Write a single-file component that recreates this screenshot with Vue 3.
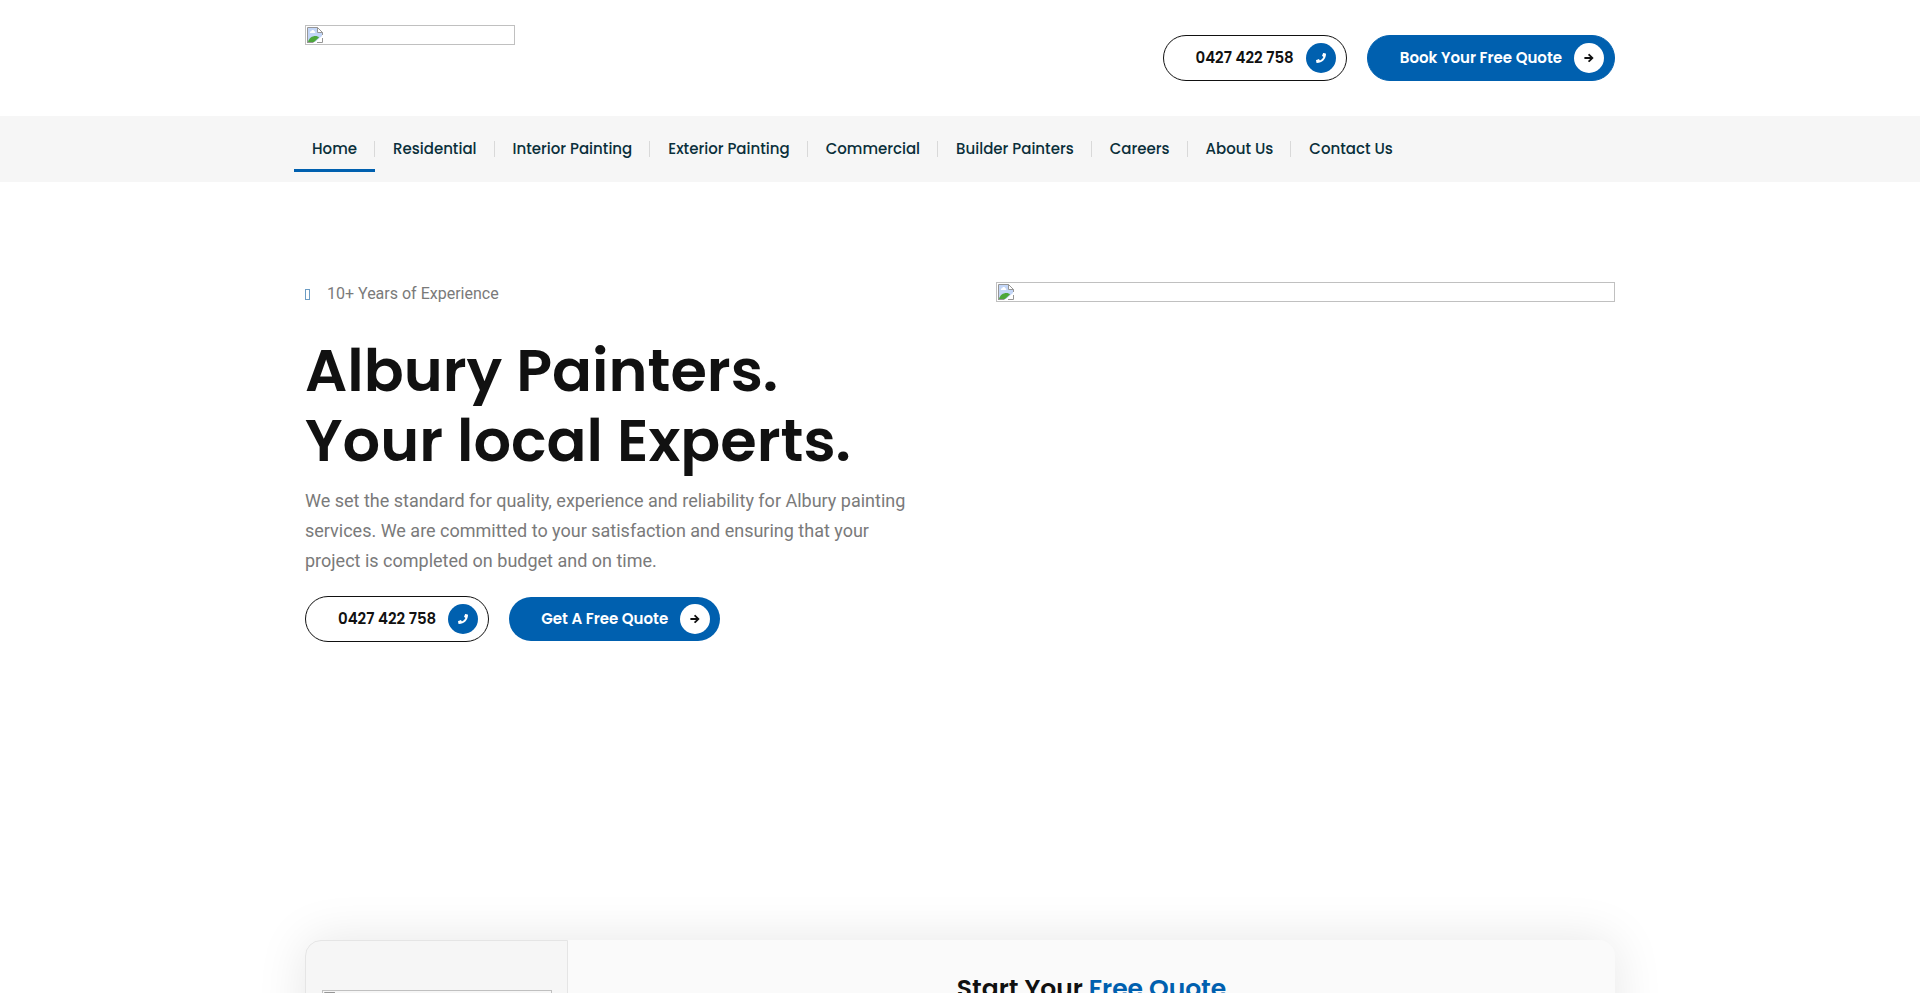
<template>
  <div class="page">
    <!-- placeholder shown where an image did not load -->
    <svg class="sprite" aria-hidden="true">
      <symbol id="missing" viewBox="0 0 16 16">
        <path d="M1 1h10l4 4v4l-7 6H1z" fill="#c3d6f7" />
        <path d="M3 6C2.600 5 3.300 4 4.200 4.200 4.600 2.600 7 2.600 7.300 4.200 8.600 4.200 8.800 6 7.600 6z" fill="#fff" />
        <path d="M1 15c1-4 4-6 7.500-6 1.500 0 2.700.5 3.500 1.500L7 15z" fill="#4da73a" />
        <path d="M10.500.5v5h5z" fill="#fff" stroke="#969696" />
        <path d="M.5 16V.5h10l5 5V8M0 15.500h6.500M10 15.500h5.500V11" fill="none" stroke="#969696" />
      </symbol>
    </svg>

    <!-- top bar -->
    <header class="container topbar">
      <a href="#" class="logo" aria-label="Home page">
        <span class="missing-image">
          <svg width="16" height="16" aria-hidden="true"><use href="#missing" /></svg>
        </span>
      </a>
      <div class="actions">
        <a v-for="btn in headerButtons" :key="btn.text" :href="btn.href" class="btn" :class="btn.type">
          <span>{{ btn.text }}</span>
          <span class="btn-icon">
            <svg viewBox="0 0 512 512" width="10" height="10" aria-hidden="true"><path :d="icons[btn.type]" /></svg>
          </span>
        </a>
      </div>
    </header>

    <!-- main menu -->
    <nav class="menu-bar">
      <ul class="menu">
        <li v-for="(item, i) in menu" :key="item">
          <a href="#" :class="{ active: i === 0 }">{{ item }}</a>
        </li>
      </ul>
    </nav>

    <!-- hero -->
    <section class="container hero">
      <div class="hero-text">
        <p class="experience">
          <i class="glyph-box"></i>
          <span>10+ Years of Experience</span>
        </p>
        <h1>Albury Painters.<br>Your local Experts.</h1>
        <p class="lead">
          We set the standard for quality, experience and reliability for Albury painting
          services. We are committed to your satisfaction and ensuring that your
          project is completed on budget and on time.
        </p>
        <div class="actions">
          <a v-for="btn in heroButtons" :key="btn.text" :href="btn.href" class="btn" :class="btn.type">
            <span>{{ btn.text }}</span>
            <span class="btn-icon">
              <svg viewBox="0 0 512 512" width="10" height="10" aria-hidden="true"><path :d="icons[btn.type]" /></svg>
            </span>
          </a>
        </div>
      </div>
      <div class="hero-image">
        <span class="missing-image">
          <svg width="16" height="16" aria-hidden="true"><use href="#missing" /></svg>
        </span>
      </div>
    </section>

    <!-- quote card -->
    <section class="container">
      <div class="quote-card">
        <div class="quote-side">
          <span class="missing-image">
            <svg width="16" height="16" aria-hidden="true"><use href="#missing" /></svg>
          </span>
        </div>
        <div class="quote-main">
          <h2>Start Your <span>Free Quote</span></h2>
        </div>
      </div>
    </section>
  </div>
</template>

<script setup>
const menu = [
  'Home',
  'Residential',
  'Interior Painting',
  'Exterior Painting',
  'Commercial',
  'Builder Painters',
  'Careers',
  'About Us',
  'Contact Us'
]

const phone = { text: '0427 422 758', href: 'tel:0427422758', type: 'phone' }
const headerButtons = [phone, { text: 'Book Your Free Quote', href: '#', type: 'quote' }]
const heroButtons = [phone, { text: 'Get A Free Quote', href: '#', type: 'quote' }]

const icons = {
  phone: 'M493 25 389 1c-11-3-23 3-27 14l-48 112c-4 10-1 21 7 28l61 49c-36 77-99 141-178 178l-49-61c-7-8-18-11-28-7L15 362c-11 5-17 16-14 27l24 104c2 11 12 19 24 19 256 0 463-207 463-463 0-12-8-22-19-24z',
  quote: 'M217 83l32-32c10-10 25-10 35 0l198 188c10 10 10 25 0 35L284 462c-10 10-25 10-35 0l-32-32c-10-10-9-26 0-36l96-90H40c-14 0-24-10-24-24v-48c0-14 10-24 24-24h273l-96-90c-10-10-10-25 0-35z'
}
</script>

<style>
body {
  margin: 0;
  background: #fff;
}
</style>

<style scoped>
.page {
  height: 100vh;
  overflow: hidden;
  font-family: Roboto, sans-serif;
  color: #7a7a7a;
}

.sprite {
  position: absolute;
  width: 0;
  height: 0;
}

.container {
  max-width: 1310px;
  margin: 0 auto;
}

.topbar {
  display: flex;
  justify-content: space-between;
  height: 116px;
}

.logo {
  width: 210px;
  padding-top: 25px;
}

.missing-image {
  display: block;
  box-sizing: border-box;
  height: 20px;
  padding: 1px;
  border: 1px solid #c0c0c0;
}

.missing-image svg {
  display: block;
}

.actions {
  display: flex;
  align-items: center;
  gap: 20px;
}

.btn {
  display: flex;
  align-items: center;
  gap: 12px;
  padding: 7px 10px 7px 32px;
  border: 1px solid #0060af;
  border-radius: 24px;
  font: 600 15px/30px Poppins, Inter, sans-serif;
  text-decoration: none;
  white-space: nowrap;
}

.btn.phone {
  border-color: #111;
  color: #111;
}

.btn.quote {
  background: #0060af;
  color: #fff;
}

.hero .btn.quote {
  border: none;
}

.btn-icon {
  display: flex;
  align-items: center;
  justify-content: center;
  width: 30px;
  height: 30px;
  border-radius: 50%;
}

.phone .btn-icon {
  background: #0060af;
  fill: #fff;
}

.quote .btn-icon {
  background: #fff;
  fill: #111;
}

.menu-bar {
  padding: 10px 0;
  background: #f6f6f6;
}

.menu {
  display: flex;
  max-width: 1332px;
  margin: 0 auto;
  padding: 0;
  list-style: none;
}

.menu li {
  display: flex;
  align-items: center;
}

.menu li + li::before {
  content: '';
  width: 1px;
  height: 16px;
  margin-left: -1px;
  background: #d9d9d9;
}

.menu a {
  padding: 11px 18px 9px;
  border-bottom: 3px solid transparent;
  font: 500 15px/23px Poppins, Inter, sans-serif;
  color: #0a2f3a;
  text-decoration: none;
  white-space: nowrap;
}

.menu a.active {
  border-color: #0060af;
}

.hero {
  display: flex;
  justify-content: space-between;
  min-height: 758px;
  padding-top: 100px;
  box-sizing: border-box;
}

.hero-text {
  width: 615px;
}

.hero-image {
  width: 619px;
}

.experience {
  display: flex;
  align-items: center;
  gap: 17px;
  margin: 0 0 30px;
  font-size: 16px;
  line-height: 24px;
}

.glyph-box {
  width: 3px;
  height: 9px;
  border: 1px solid #6c9cc4;
}

h1 {
  margin: 0 0 10px;
  font: 600 59px/70px Poppins, Inter, sans-serif;
  color: #111;
  white-space: nowrap;
}

.lead {
  margin: 0 0 20px;
  font-size: 18px;
  line-height: 30px;
}

.quote-card {
  display: flex;
  min-height: 400px;
  border-radius: 16px;
  background: #fafafa;
  box-shadow: 0 0 50px rgba(0, 0, 0, 0.1);
}

.quote-side {
  box-sizing: border-box;
  width: 263px;
  padding: 49px 15px 0 16px;
  border: 1px solid #e5e5e5;
  border-radius: 16px 0 0 16px;
  background: #f6f6f6;
}

.quote-main {
  flex: 1;
  padding-top: 30px;
  text-align: center;
}

h2 {
  margin: 0;
  font: 600 25px/38px Poppins, Inter, sans-serif;
  color: #111;
}

h2 span {
  color: #0060af;
}
</style>
